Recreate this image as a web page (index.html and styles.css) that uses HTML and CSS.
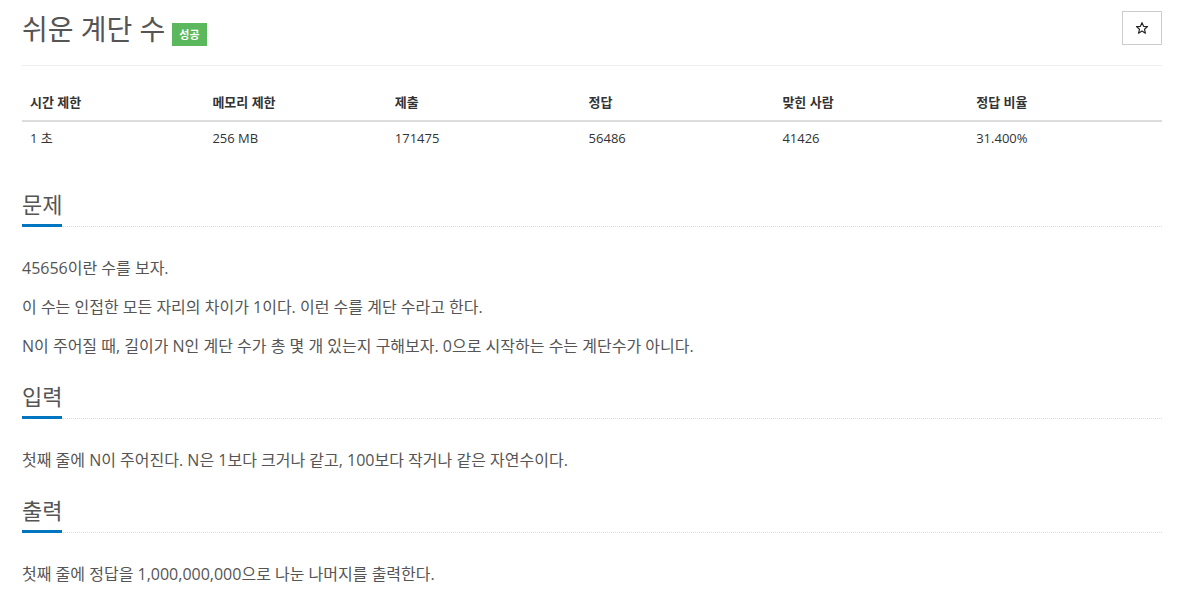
FILE: index.html
```html
<!DOCTYPE html>
<html lang="ko">
<head>
<meta charset="utf-8">
<title>쉬운 계단 수</title>
<link rel="stylesheet" href="styles.css">
</head>
<body>
<div class="page">
  <header class="page-header">
    <div class="title-wrap">
      <h1 class="title">쉬운 계단 수</h1>
      <span class="badge">성공</span>
    </div>
    <button class="star-btn" type="button" aria-label="즐겨찾기">
      <svg width="14" height="14" viewBox="0 0 24 24" aria-hidden="true"><path d="M12 2.8l2.7 6.3 6.8.6-5.2 4.5 1.6 6.7L12 17.3l-5.9 3.6 1.6-6.7-5.2-4.5 6.8-.6z" fill="none" stroke="#222" stroke-width="2" stroke-linejoin="round"/></svg>
    </button>
  </header>

  <table class="info">
    <thead>
      <tr><th class="c1">시간 제한</th><th class="c1">메모리 제한</th><th class="c2">제출</th><th class="c2">정답</th><th class="c2">맞힌 사람</th><th class="c2">정답 비율</th></tr>
    </thead>
    <tbody>
      <tr><td>1 초</td><td>256 MB</td><td>171475</td><td>56486</td><td>41426</td><td>31.400%</td></tr>
    </tbody>
  </table>

  <section class="section">
    <div class="headline"><h2>문제</h2></div>
    <p>45656이란 수를 보자.</p>
    <p>이 수는 인접한 모든 자리의 차이가 1이다. 이런 수를 계단 수라고 한다.</p>
    <p>N이 주어질 때, 길이가 N인 계단 수가 총 몇 개 있는지 구해보자. 0으로 시작하는 수는 계단수가 아니다.</p>
  </section>

  <section class="section">
    <div class="headline"><h2>입력</h2></div>
    <p>첫째 줄에 N이 주어진다. N은 1보다 크거나 같고, 100보다 작거나 같은 자연수이다.</p>
  </section>

  <section class="section">
    <div class="headline"><h2>출력</h2></div>
    <p>첫째 줄에 정답을 1,000,000,000으로 나눈 나머지를 출력한다.</p>
  </section>
</div>
</body>
</html>
```

FILE: styles.css
```css
* { box-sizing: border-box; }

html, body {
  margin: 0;
  padding: 0;
  background: #fff;
}

body {
  font-family: "Open Sans", "Noto Sans CJK KR", sans-serif;
  color: #333;
}

.page {
  padding: 0 20px 0 22px;
}

.page-header {
  display: flex;
  align-items: center;
  justify-content: space-between;
  padding: 11px 0 20px;
  border-bottom: 1px solid #eee;
}

.title-wrap {
  display: flex;
  align-items: flex-start;
  gap: 7px;
  height: 34px;
}

.title {
  margin: 0;
  font-size: 28px;
  font-weight: 400;
  line-height: 36px;
  color: #555;
}

.badge {
  margin-top: 12px;
  display: inline-block;
  background: #5cb85c;
  color: #fff;
  font-size: 11px;
  font-weight: 700;
  line-height: 23px;
  height: 23px;
  padding: 0 7px;
}

.star-btn {
  width: 40px;
  height: 34px;
  border: 1px solid #ccc;
  background: #fff;
  display: flex;
  align-items: center;
  justify-content: center;
  padding: 0;
  margin: 0;
}

.info {
  width: 100%;
  border-collapse: collapse;
  margin: 18px 0 31px;
  font-size: 13px;
}

.info th, .info td {
  text-align: left;
  padding: 8px;
  line-height: 20px;
  color: #333;
}

.info td {
  padding: 6px 8px 10px;
}

.info th {
  font-weight: 700;
  border-bottom: 2px solid #ddd;
}

.info .c1 { width: 16%; }
.info .c2 { width: 17%; }

.section {
  margin-top: 23px;
}

.headline {
  display: flex;
  border-bottom: 1px dotted #ddd;
  margin-bottom: 29px;
}

.headline h2 {
  margin: 0 0 -1px;
  font-size: 22px;
  font-weight: 400;
  line-height: 30px;
  padding-bottom: 5px;
  color: #555;
  border-bottom: 3px solid #0076c0;
}

.section p {
  margin: 0 0 15px;
  font-size: 16px;
  line-height: 24px;
  color: #555;
}
```
